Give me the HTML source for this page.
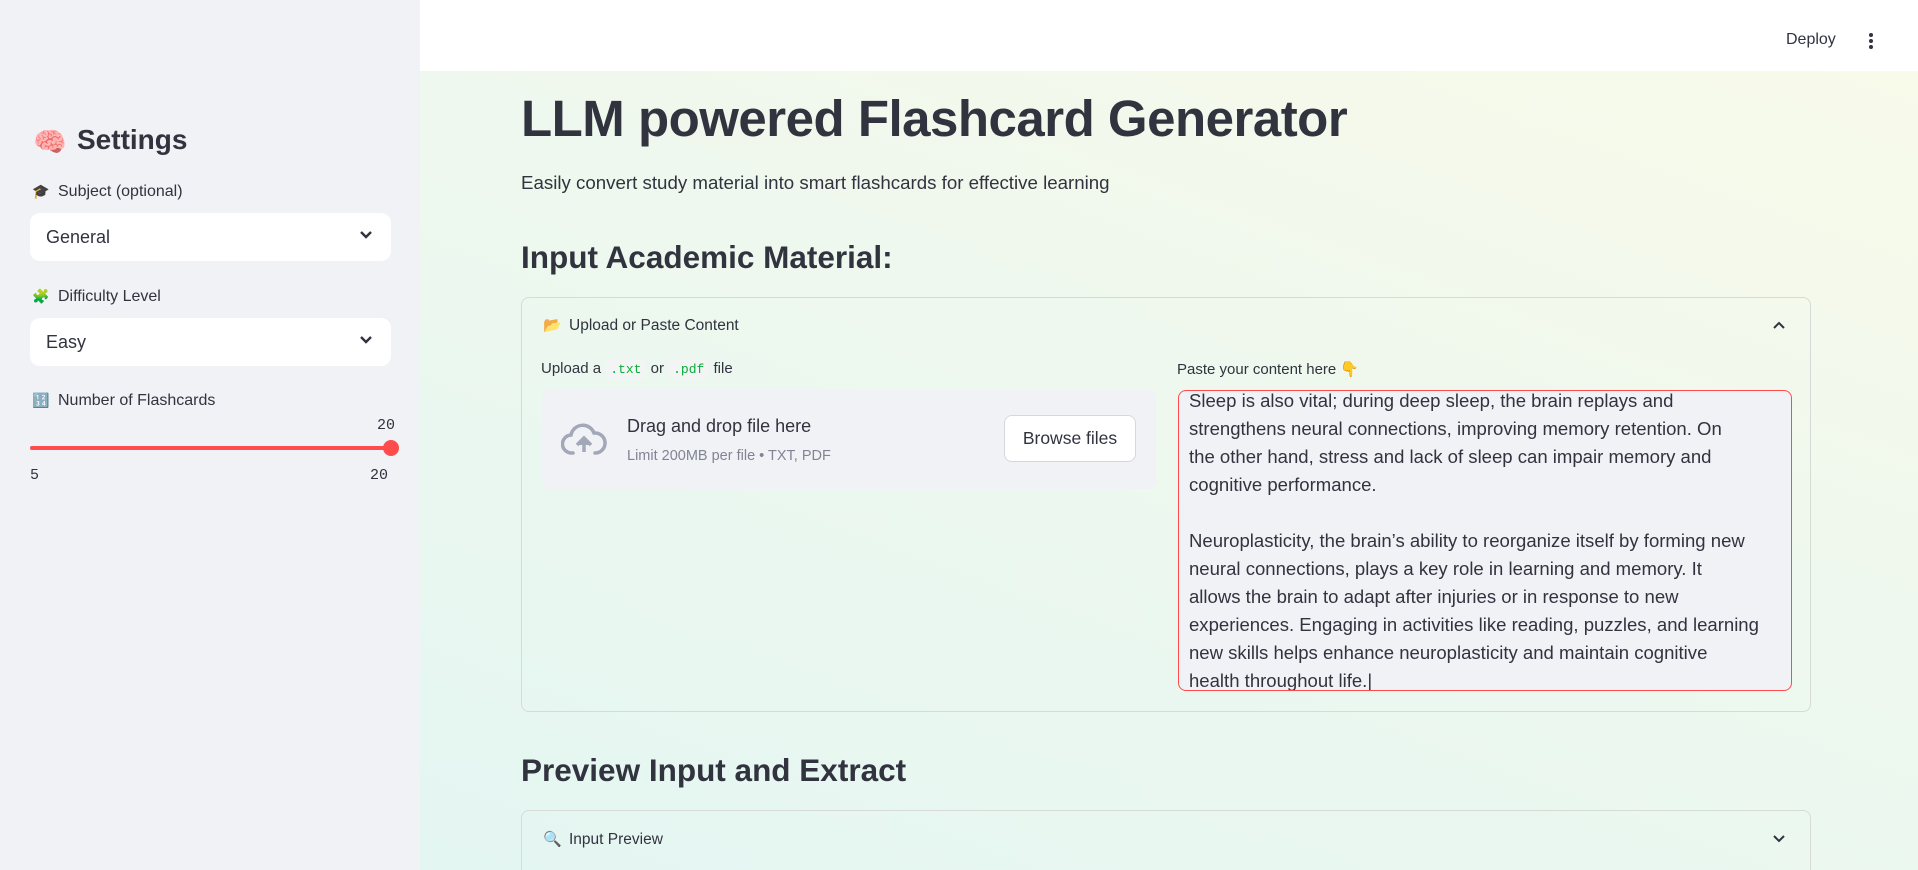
<!DOCTYPE html>
<html><head><meta charset="utf-8">
<style>
*{box-sizing:border-box;margin:0;padding:0}
body{width:1918px;height:870px;overflow:hidden;font-family:"Liberation Sans","Noto Sans CJK SC",sans-serif;color:#31333f;position:relative;background:#fff}
.sb{position:absolute;left:0;top:0;width:420px;height:870px;background:#f0f2f6}
.main{position:absolute;left:420px;top:71px;right:0;bottom:0;background:linear-gradient(200deg,#f8faea 0%,#eef8ee 45%,#e4f6f2 100%)}
.hdr{position:absolute;left:420px;top:0;right:0;height:71px;background:#fff}
.a{position:absolute;white-space:pre}
.sel{position:absolute;left:30px;width:361px;height:48px;background:#fff;border-radius:10px}
.sel span{position:absolute;left:16px;top:14px;font-size:18px}
.sel svg{position:absolute;right:18px;top:17px}
.exp{position:absolute;left:521px;width:1290px;border:1px solid #d6dbd6;border-radius:8px}
code{font-family:"Liberation Mono",monospace;font-size:13px;color:#09ab3b;background:#f3f5f4;padding:2px 5px;border-radius:4px}
</style></head><body>
<div class="sb">
  <div class="a" style="left:33px;top:126px;font-size:27px">🧠</div>
  <div class="a" style="left:77px;top:124px;font-size:28px;font-weight:bold">Settings</div>
  <div class="a" style="left:32px;top:183px;font-size:14px">🎓</div>
  <div class="a" style="left:58px;top:183px;font-size:16px">Subject (optional)</div>
  <div class="sel" style="top:213px"><span>General</span><svg width="14" height="10" viewBox="0 0 14 10"><path d="M2 2l5 5 5-5" fill="none" stroke="#31333f" stroke-width="2.4"/></svg></div>
  <div class="a" style="left:32px;top:288px;font-size:14px">🧩</div>
  <div class="a" style="left:58px;top:288px;font-size:16px">Difficulty Level</div>
  <div class="sel" style="top:318px"><span>Easy</span><svg width="14" height="10" viewBox="0 0 14 10"><path d="M2 2l5 5 5-5" fill="none" stroke="#31333f" stroke-width="2.4"/></svg></div>
  <div class="a" style="left:32px;top:392px;font-size:14px">🔢</div>
  <div class="a" style="left:58px;top:392px;font-size:16px">Number of Flashcards</div>
  <div class="a" style="left:377px;top:417px;font-size:15px;font-family:'Liberation Mono',monospace">20</div>
  <div style="position:absolute;left:30px;top:446px;width:361px;height:4px;background:#ff4b4b;border-radius:2px"></div>
  <div style="position:absolute;left:383px;top:440px;width:16px;height:16px;background:#ff4b4b;border-radius:50%"></div>
  <div class="a" style="left:30px;top:467px;font-size:15px;font-family:'Liberation Mono',monospace">5</div>
  <div class="a" style="left:370px;top:467px;font-size:15px;font-family:'Liberation Mono',monospace">20</div>
</div>
<div class="hdr">
  <div class="a" style="left:1366px;top:31px;font-size:16px">Deploy</div>
  <svg style="position:absolute;left:1447px;top:32px" width="8" height="18"><circle cx="4" cy="3" r="2" fill="#31333f"/><circle cx="4" cy="9" r="2" fill="#31333f"/><circle cx="4" cy="15" r="2" fill="#31333f"/></svg>
</div>
<div class="main"></div>
<div class="a" style="left:521px;top:89px;font-size:51px;font-weight:bold;letter-spacing:-0.5px">LLM powered Flashcard Generator</div>
<div class="a" style="left:521px;top:172px;font-size:18.7px">Easily convert study material into smart flashcards for effective learning</div>
<div class="a" style="left:521px;top:239px;font-size:31.5px;font-weight:bold">Input Academic Material:</div>
<div class="exp" style="top:297px;height:415px"></div>
<div class="a" style="left:543px;top:316px;font-size:15px">📂</div>
<div class="a" style="left:569px;top:317px;font-size:15.5px">Upload or Paste Content</div>
<svg style="position:absolute;left:1772px;top:320px" width="14" height="10"><path d="M2 8l5-5 5 5" fill="none" stroke="#31333f" stroke-width="2"/></svg>
<div class="a" style="left:541px;top:360px;font-size:15px">Upload a <code>.txt</code> or <code>.pdf</code> file</div>
<div style="position:absolute;left:542px;top:390px;width:614px;height:99px;background:#f0f2f6;border-radius:8px"></div>
<svg style="position:absolute;left:561px;top:421px" width="46" height="36" viewBox="0 0 46 36"><path d="M12 32h-1a9 9 0 0 1-1-18 12 12 0 0 1 23-2 10 10 0 0 1 2 20h-1" fill="none" stroke="#a3a8b8" stroke-width="3.5" stroke-linecap="round"/><path d="M23 31v-13M16 24l7-7 7 7" fill="#a3a8b8" stroke="#a3a8b8" stroke-width="3.5"/></svg>
<div class="a" style="left:627px;top:416px;font-size:18px">Drag and drop file here</div>
<div class="a" style="left:627px;top:448px;font-size:14.5px;color:#808495">Limit 200MB per file • TXT, PDF</div>
<div style="position:absolute;left:1004px;top:415px;width:132px;height:47px;background:#fff;border:1px solid #d5d7dc;border-radius:8px;font-size:17.5px;text-align:center;line-height:45px">Browse files</div>
<div class="a" style="left:1177px;top:360px;font-size:15px">Paste your content here 👇</div>
<div style="position:absolute;left:1178px;top:390px;width:614px;height:301px;background:#f0f2f6;border:1px solid #ff4b4b;border-radius:8px;overflow:hidden">
<div class="a" style="left:10px;top:-4px;font-size:18px;line-height:28px;transform:scaleX(1.03);transform-origin:left top">Sleep is also vital; during deep sleep, the brain replays and
strengthens neural connections, improving memory retention. On
the other hand, stress and lack of sleep can impair memory and
cognitive performance.

Neuroplasticity, the brain’s ability to reorganize itself by forming new
neural connections, plays a key role in learning and memory. It
allows the brain to adapt after injuries or in response to new
experiences. Engaging in activities like reading, puzzles, and learning
new skills helps enhance neuroplasticity and maintain cognitive
health throughout life.|</div>
</div>
<div class="a" style="left:521px;top:752px;font-size:31.5px;font-weight:bold">Preview Input and Extract</div>
<div class="exp" style="top:810px;height:60px;border-bottom:none;border-radius:8px 8px 0 0"></div>
<div class="a" style="left:543px;top:830px;font-size:15px">🔍</div>
<div class="a" style="left:569px;top:831px;font-size:15.5px">Input Preview</div>
<svg style="position:absolute;left:1772px;top:834px" width="14" height="10"><path d="M2 2l5 5 5-5" fill="none" stroke="#31333f" stroke-width="2"/></svg>
</body></html>
